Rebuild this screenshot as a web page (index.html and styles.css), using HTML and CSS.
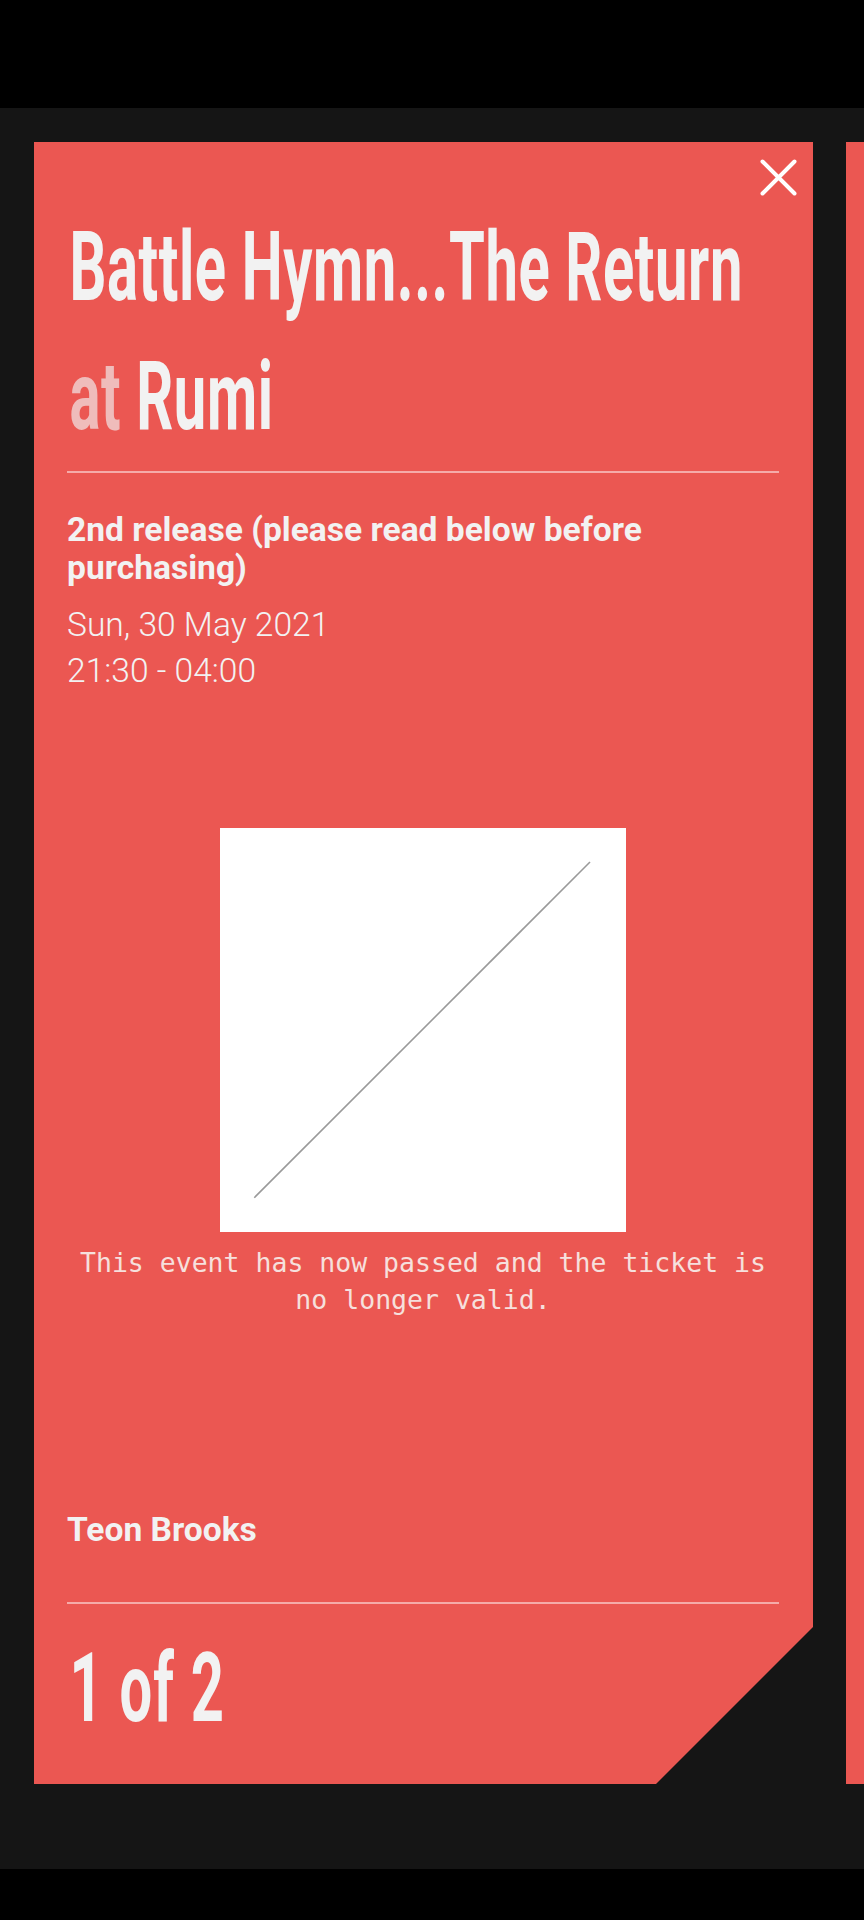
FILE: index.html
```html
<!DOCTYPE html>
<html lang="en">
<head>
<meta charset="utf-8">
<title>Ticket</title>
<link rel="stylesheet" href="styles.css">
</head>
<body>
<div class="statusbar"></div>
<main class="carousel">
  <section class="ticket">
    <button class="close" aria-label="Close">
      <svg width="37" height="37" viewBox="0 0 37 37"><path d="M2.5 2.5 L34.5 34.5 M34.5 2.5 L2.5 34.5" stroke="#ffffff" stroke-width="4" stroke-linecap="round" fill="none"/></svg>
    </button>
    <h1 class="title">
      <span class="tline"><span class="tinner">Battle Hymn...The Return</span></span>
      <span class="tline"><span class="tinner"><span class="at">at</span> Rumi</span></span>
    </h1>
    <hr class="rule">
    <h2 class="release">2nd release (please read below before purchasing)</h2>
    <div class="when">
      <div>Sun, 30 May 2021</div>
      <div>21:30 - 04:00</div>
    </div>
    <div class="qr">
      <svg width="406" height="404" viewBox="0 0 406 404"><line x1="34.3" y1="369.7" x2="370" y2="34" stroke="#9a9a9a" stroke-width="1.6"/></svg>
    </div>
    <p class="notice">This event has now passed and the ticket is no longer valid.</p>
    <div class="holder">Teon Brooks</div>
    <hr class="rule rule-bottom">
    <div class="count"><span class="tinner">1 of 2</span></div>
  </section>
  <section class="ticket ticket-next"></section>
</main>
<div class="navbar"></div>
</body>
</html>
```
FILE: styles.css
```css
html, body {
  margin: 0;
  padding: 0;
  background: #000;
}
body {
  width: 864px;
  height: 1920px;
  overflow: hidden;
  font-family: Roboto, "Noto Sans", sans-serif;
  color: #f2f2f2;
}
.statusbar {
  height: 108px;
  background: #000;
}
.carousel {
  height: 1761px;
  background: #151515;
  display: flex;
  gap: 33px;
  padding: 34px 0 0 34px;
  box-sizing: border-box;
  overflow: hidden;
}
.navbar {
  height: 51px;
  background: #000;
}
.ticket {
  position: relative;
  flex: 0 0 779px;
  width: 779px;
  min-width: 0;
  height: 1642px;
  background: #eb5752;
  box-sizing: border-box;
  padding: 61px 34px 0 33px;
  overflow: hidden;
  clip-path: polygon(0 0, 100% 0, 100% calc(100% - 157px), calc(100% - 157px) 100%, 0 100%);
}
.ticket-next {
  clip-path: none;
}
.close {
  position: absolute;
  top: 17px;
  right: 16px;
  width: 37px;
  height: 37px;
  padding: 0;
  border: 0;
  background: none;
}
.close svg { display: block; }
.title {
  margin: 0;
  font-size: 97px;
  font-weight: 700;
  line-height: 129px;
  color: #f2f2f2;
}
.tline {
  display: block;
  white-space: nowrap;
}
.tinner {
  display: inline-block;
  transform: scaleX(0.597);
  transform-origin: 0 50%;
  white-space: nowrap;
  padding-left: 4px;
  letter-spacing: 1px;
}
.at {
  color: #efbcbb;
}
.rule {
  margin: 10px 0 0 0;
  border: 0;
  height: 2px;
  background: rgba(255, 255, 255, 0.5);
}
.release {
  margin: 38px 0 0 0;
  font-size: 33.6px;
  font-weight: 700;
  line-height: 38px;
}
.when {
  margin-top: 15px;
  font-size: 33.6px;
  font-weight: 300;
  line-height: 46px;
}
.qr {
  width: 406px;
  height: 404px;
  margin: 134px auto 0;
  background: #fff;
}
.qr svg { display: block; }
.notice {
  margin: 13px 0 0;
  font-family: "DejaVu Sans Mono", "Liberation Mono", monospace;
  font-size: 26.5px;
  line-height: 36.6px;
  text-align: center;
  color: #f6e0dd;
}
.holder {
  margin-top: 193px;
  font-size: 33.6px;
  font-weight: 700;
  line-height: 38px;
}
.rule-bottom {
  margin-top: 53px;
}
.count {
  margin-top: 20px;
  font-size: 97px;
  font-weight: 700;
  line-height: 129px;
  white-space: nowrap;
}
.count .tinner {
  letter-spacing: 2px;
}
```
